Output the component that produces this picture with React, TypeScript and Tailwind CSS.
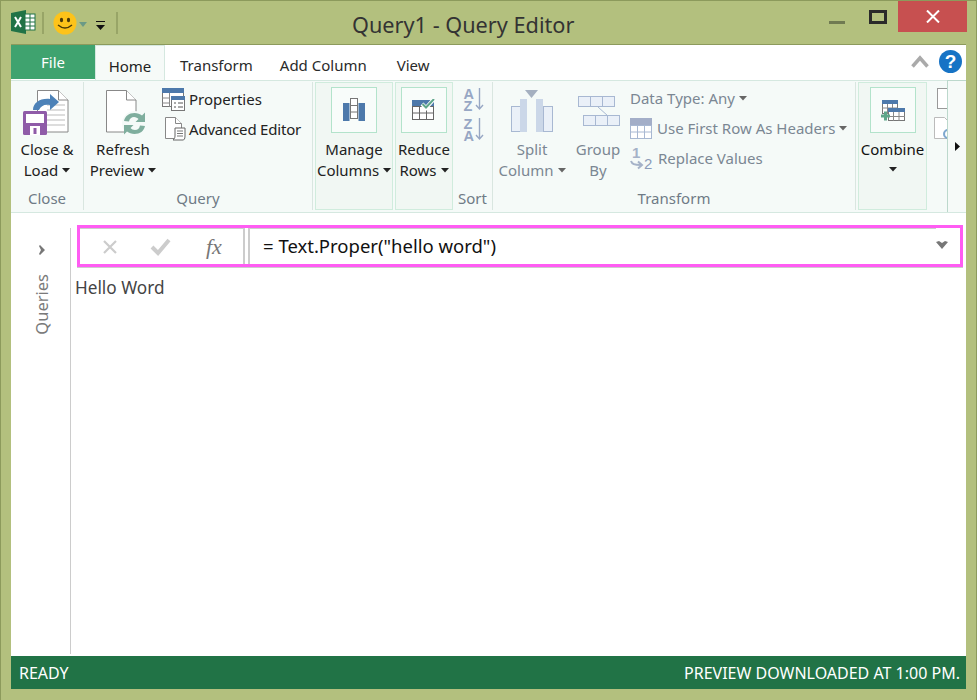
import React from "react";

const Caret = ({ c = "#222" }: { c?: string }) => (
  <svg width="8" height="5" viewBox="0 0 8 5" className="inline-block ml-[4px] align-[3px]"><path d="M0 0h8L4 4.5z" fill={c} /></svg>
);

const ExcelIcon = () => (
  <svg width="25" height="24" viewBox="0 0 25 24">
    <path d="M0 3 15 0v24L0 21z" fill="#217346" />
    <rect x="14" y="4" width="10" height="16" fill="#fff" stroke="#217346" />
    <path d="M14 8h10M14 12h10M14 16h10M19 4v16" stroke="#217346" fill="none" />
    <path d="M4 7l6 10M10 7l-6 10" stroke="#fff" strokeWidth="2" fill="none" />
  </svg>
);

const Smiley = () => (
  <svg width="24" height="24" viewBox="0 0 24 24">
    <circle cx="12" cy="12" r="11.5" fill="#fdc31a" />
    <ellipse cx="8.5" cy="9" rx="1.6" ry="2.2" fill="#4a3a08" />
    <ellipse cx="15.5" cy="9" rx="1.6" ry="2.2" fill="#4a3a08" />
    <path d="M5 14q7 6 14 0" stroke="#4a3a08" strokeWidth="1.4" fill="none" />
  </svg>
);

const CloseLoadIcon = () => (
  <svg width="46" height="45" viewBox="0 0 46 45" className="block">
    <path d="M14.500.5h21l9.500 9.500v32H14.500z" fill="#fff" stroke="#888" />
    <path d="M35.500.5V10H45" fill="#fff" stroke="#888" />
    <path d="M24 15h18M24 20h18M24 25h18M24 30h18M24 35h18" stroke="#bbb" />
    <path d="M10 20c0-7 7-12 17-11V4l9 8-9 8v-5c-6-1-9 1-11 5z" fill="#4d82b8" />
    <rect x="0" y="21" width="24" height="24" rx="1.500" fill="#8f5ba8" />
    <rect x="3" y="24" width="18" height="9" fill="#fff" />
    <rect x="7" y="36" width="10" height="9" fill="#fff" />
    <rect x="10.500" y="38" width="3" height="6" fill="#8f5ba8" />
  </svg>
);

const RefreshIcon = () => (
  <svg width="40" height="45" viewBox="0 0 40 45" className="block">
    <path d="M.5.500h20l9.500 9.500v32H.5z" fill="#fff" stroke="#888" />
    <path d="M20.500.5V10H30" fill="#fff" stroke="#888" />
    <circle cx="28.500" cy="33.500" r="12.500" fill="#f5faf8" />
    <path d="M18 31c1-5 5-8 10.500-8 3 0 5.500 1 7.500 2.500l3-3v9.500h-9.500l3-3c-1-1-2.500-2-4.500-2-2.500 0-4.500 1.500-5 4.500z" fill="#7fae9e" />
    <path d="M39 36c-1 5-5 8-10.500 8-3 0-5.500-1-7.500-2.500l-3 3V35h9.500l-3 3c1 1 2.500 2 4.500 2 2.500 0 4.500-1.500 5-4.500z" fill="#7fae9e" />
  </svg>
);

const PropertiesIcon = () => (
  <svg width="23" height="23" viewBox="0 0 23 23" className="block">
    <rect x=".5" y=".5" width="21" height="18" fill="#fff" stroke="#777" />
    <rect x="0" y="0" width="22" height="5" fill="#4d79ab" />
    <path d="M7.500 5v14M0 10h8M0 15h8" stroke="#888" />
    <rect x="9.500" y="8.500" width="13" height="14" fill="#fff" stroke="#777" />
    <rect x="9" y="8" width="14" height="4" fill="#4d79ab" />
    <path d="M12 15h2M16 15h5M12 19h2M16 19h5" stroke="#555" />
  </svg>
);

const AdvEditorIcon = () => (
  <svg width="22" height="24" viewBox="0 0 22 24" className="block">
    <path d="M.5.500h10l6 6v15H.5z" fill="#fff" stroke="#888" />
    <path d="M10.500.5v6h6" fill="#fff" stroke="#888" />
    <path d="M10 11h10v8c0 3-1 4-2 4H8c1-1 2-2 2-4z" fill="#fff" stroke="#666" />
    <path d="M12 14h6M12 16.500h6M12 19h6" stroke="#777" />
  </svg>
);

const ManageIcon = () => (
  <svg width="22" height="24" viewBox="0 0 22 24">
    <rect x="0" y="5" width="6.500" height="18" fill="#4d79ab" />
    <rect x="15.500" y="5" width="6.500" height="18" fill="#4d79ab" />
    <rect x="7.500" y=".5" width="7" height="20" fill="#fff" stroke="#777" />
    <path d="M7 7.500h8M7 14h8" stroke="#777" />
  </svg>
);

const ReduceIcon = () => (
  <svg width="24" height="22" viewBox="0 0 24 22">
    <rect x=".5" y="7.500" width="21" height="13" fill="#fff" stroke="#666" />
    <path d="M0 14h22M7.500 7v14M14.500 7v14" stroke="#666" />
    <rect x="0" y="1" width="22" height="6" fill="#4d79ab" />
    <path d="M10 5l4 4 8-9" stroke="#fff" strokeWidth="4" fill="none" />
    <path d="M10.500 5l3.500 3.500 8-8.500" stroke="#5ea68a" strokeWidth="2" fill="none" />
  </svg>
);

const SortAZ = ({ flip }: { flip?: boolean }) => (
  <svg width="22" height="23" viewBox="0 0 22 23" className="block overflow-visible">
    <text x="0.500" y={flip ? 23 : 11} fontFamily="Liberation Sans" fontWeight="700" fontSize="14.500" fill="#97a7c4">A</text>
    <text x="0.500" y={flip ? 11 : 23} fontFamily="Liberation Sans" fontWeight="700" fontSize="14.500" fill="#97a7c4">Z</text>
    <path d="M16.500 0v21M13 17l3.500 4 3.500-4" stroke="#97a7c4" strokeWidth="1.400" fill="none" />
  </svg>
);

const SplitIcon = () => (
  <svg width="42" height="42" viewBox="0 0 42 42" className="block">
    <rect x=".5" y="16.500" width="9" height="25" fill="#eaf0f8" stroke="#a8b8d2" />
    <rect x="32.500" y="16.500" width="9" height="25" fill="#eaf0f8" stroke="#a8b8d2" />
    <rect x="9" y="9" width="7" height="33" fill="#cbd7e8" />
    <rect x="25" y="9" width="7" height="33" fill="#cbd7e8" />
    <path d="M14 0h13l-6.500 8z" fill="#a5b0c0" />
  </svg>
);

const GroupIcon = () => (
  <svg width="42" height="30" viewBox="0 0 42 30" className="block">
    <rect x=".5" y=".5" width="36" height="10" fill="#eaf0f8" stroke="#a8b8d2" />
    <path d="M12.500 0v11M24.500 0v11" stroke="#a8b8d2" />
    <rect x="5.500" y="19.500" width="36" height="10" fill="#eaf0f8" stroke="#a8b8d2" />
    <path d="M17.500 19v11M29.500 19v11M20 11l10 9" stroke="#a8b8d2" />
  </svg>
);

const HeadersIcon = () => (
  <svg width="22" height="21" viewBox="0 0 22 21" className="block">
    <rect x="0" y="0" width="22" height="7" fill="#a3aec8" />
    <rect x=".5" y="7.500" width="21" height="13" fill="#fff" stroke="#a8b8d2" />
    <path d="M0 14h22M7.500 7v14M14.500 7v14" stroke="#a8b8d2" />
  </svg>
);

const ReplaceIcon = () => (
  <svg width="22" height="24" viewBox="0 0 22 24" className="block overflow-visible">
    <text x="2" y="12" fontFamily="Liberation Sans" fontWeight="700" fontSize="15" fill="#a5b2c8">1</text>
    <text x="14" y="23" fontFamily="Liberation Sans" fontSize="15" fill="#8c9cb8">2</text>
    <path d="M1 15c1 3 3 4 10 4M8 15.500l4 3.500-4 3.500" stroke="#a5b2c8" strokeWidth="2" fill="none" />
  </svg>
);

const CombineIcon = () => (
  <svg width="24" height="21" viewBox="0 0 24 21">
    <rect x="1.500" y=".5" width="15" height="13" fill="#fff" stroke="#777" />
    <rect x="1" y="0" width="16" height="4" fill="#4d79ab" />
    <path d="M1 8h16M6.500 4v10M11.500 4v10" stroke="#888" />
    <rect x="7.500" y="8.500" width="16" height="12" fill="#fff" stroke="#777" />
    <rect x="7" y="8" width="17" height="4" fill="#4d79ab" />
    <path d="M7 16.500h17M12.500 12v9M18 12v9" stroke="#888" />
    <path d="M0 16h9M4.500 11.500v9" stroke="#5ea68a" strokeWidth="3" />
  </svg>
);

const Sep = () => <div className="w-px h-[128px] mt-[1px] bg-[#d9e6e0]" />;

const BigBox = ({ children }: { children: React.ReactNode }) => (
  <div className="w-[46px] h-[46px] border border-[#b3e3cb] bg-[#f8fcfa] flex items-center justify-center">{children}</div>
);

const GroupLabel = ({ children }: { children: React.ReactNode }) => (
  <div className="h-[24px] leading-[24px] text-center text-[15px] text-[#6f7b86]">{children}</div>
);

export default function App() {
  return (
    <div className="relative w-[977px] h-[700px] bg-[#b3c07e] border-t border-l border-r border-[#8c9a5c] overflow-hidden font-['Noto_Sans',sans-serif] text-[15px] text-[#222] flex flex-col">
      {/* title bar */}
      <div className="h-[43px] shrink-0 flex items-start pl-[10px] relative">
        <div className="mt-[9px]"><ExcelIcon /></div>
        <div className="w-[2px] h-[22px] bg-[#98a567] mt-[11px] ml-[6px]" />
        <div className="mt-[10px] ml-[9px]"><Smiley /></div>
        <svg width="8" height="5" viewBox="0 0 8 5" className="mt-[21px] ml-[2px]"><path d="M0 0h8L4 5z" fill="#6b9a86" /></svg>
        <svg width="10" height="10" viewBox="0 0 10 10" className="mt-[20px] ml-[9px]"><path d="M0 .5h9" stroke="#111" /><path d="M0 4h9L4.500 9z" fill="#111" /></svg>
        <div className="w-[2px] h-[22px] bg-[#98a567] mt-[11px] ml-[10px]" />
        <div className="ml-[234px] mt-[9px] text-[21.7px] leading-[30px] text-[#333] whitespace-nowrap">Query1 - Query Editor</div>
        <div className="flex-1" />
        <div className="w-[16px] h-[3px] bg-[#707a52] mt-[20px] mr-[24px]" />
        <div className="w-[18px] h-[14px] border-[3px] border-[#2a2a2a] mt-[9px] mr-[11px]" />
        <div className="w-[69px] h-[31px] bg-[#c75050] flex items-center justify-center mr-[9px]">
          <svg width="14" height="13" viewBox="0 0 14 13"><path d="M1 .5l12 12M13 .5l-12 12" stroke="#fff" strokeWidth="2" /></svg>
        </div>
      </div>

      {/* window */}
      <div className="ml-[10px] mr-[10px] w-[955px] h-[645px] bg-white border-t border-[#8c9a5c] flex flex-col">
        {/* tabs */}
        <div className="h-[35px] shrink-0 flex items-start">
          <div className="w-[84px] h-[34px] bg-[#3fa36f] text-white text-center leading-[34px] text-[15px]">File</div>
          <div className="w-[70px] h-[35px] bg-[#f6faf8] border-t border-l border-r border-[#d5e8e0] text-center leading-[41px] text-[#222]">Home</div>
          <div className="ml-[15px] leading-[41px] text-[#2a2a2a]">Transform</div>
          <div className="ml-[27px] leading-[41px] text-[#2a2a2a]">Add Column</div>
          <div className="ml-[30px] leading-[41px] text-[#2a2a2a]">View</div>
          <div className="flex-1" />
          <svg width="18" height="13" viewBox="0 0 18 13" className="mt-[10px]"><path d="M1.500 11.500 9 3l7.500 8.500" stroke="#aaa" strokeWidth="3.500" fill="none" /></svg>
          <div className="w-[23px] h-[23px] rounded-full bg-[#1673c5] text-white font-bold text-[19px] leading-[23px] text-center ml-[10px] mr-[4px] mt-[5px] font-['Liberation_Sans']">?</div>
        </div>

        {/* ribbon */}
        <div className="h-[133px] shrink-0 bg-[#f5faf8] border-t border-b border-[#d5e8e0] flex items-start relative">
          {/* Close */}
          <div className="w-[72px] h-[129px] flex flex-col">
            <div className="mt-[9px] ml-[12px]"><CloseLoadIcon /></div>
            <div className="mt-[4px] text-center leading-[21px] whitespace-nowrap">Close &amp;<br />Load<Caret /></div>
            <div className="flex-1" />
            <GroupLabel>Close</GroupLabel>
          </div>
          <Sep />
          {/* Query */}
          <div className="w-[228px] h-[129px] flex flex-col">
            <div className="flex flex-1">
              <div className="w-[78px] flex flex-col">
                <div className="mt-[9px] ml-[22px]"><RefreshIcon /></div>
                <div className="mt-[4px] text-center leading-[21px] whitespace-nowrap">Refresh<br />Preview<Caret /></div>
              </div>
              <div className="flex flex-col pt-[3px]">
                <div className="h-[30px] flex items-center gap-[4px]"><PropertiesIcon /><span className="whitespace-nowrap">Properties</span></div>
                <div className="h-[30px] flex items-center gap-[2px] pl-[3px]"><AdvEditorIcon /><span className="whitespace-nowrap tracking-[-0.2px]">Advanced Editor</span></div>
              </div>
            </div>
            <GroupLabel>Query</GroupLabel>
          </div>
          <Sep />
          {/* Manage */}
          <div className="ml-[2px] mt-[1px] w-[78px] h-[128px] bg-[#f1f7f3] border border-[#d0ecdd] flex flex-col items-center">
            <div className="mt-[4px]"><BigBox><ManageIcon /></BigBox></div>
            <div className="mt-[6px] text-center leading-[21px] whitespace-nowrap">Manage<br />Columns<Caret /></div>
          </div>
          {/* Reduce */}
          <div className="ml-[2px] mt-[1px] w-[58px] h-[128px] bg-[#f1f7f3] border border-[#d0ecdd] flex flex-col items-center">
            <div className="mt-[4px]"><BigBox><ReduceIcon /></BigBox></div>
            <div className="mt-[6px] text-center leading-[21px] whitespace-nowrap">Reduce<br />Rows<Caret /></div>
          </div>
          {/* Sort */}
          <div className="w-[39px] h-[129px] flex flex-col items-center">
            <div className="mt-[7px] ml-[2px] flex flex-col gap-[7px]"><SortAZ /><SortAZ flip /></div>
            <div className="flex-1" />
            <GroupLabel>Sort</GroupLabel>
          </div>
          <Sep />
          {/* Transform */}
          <div className="w-[362px] h-[129px] flex flex-col text-[#7b8793]">
            <div className="flex flex-1">
              <div className="w-[78px] flex flex-col items-center">
                <div className="mt-[9px] h-[44px]"><SplitIcon /></div>
                <div className="mt-[5px] text-center leading-[21px] whitespace-nowrap">Split<br />Column<Caret c="#666" /></div>
              </div>
              <div className="w-[58px] flex flex-col items-center pr-[4px]">
                <div className="mt-[9px] h-[44px] pt-[6px] ml-[2px]"><GroupIcon /></div>
                <div className="mt-[5px] text-center leading-[21px]">Group<br />By</div>
              </div>
              <div className="flex flex-col pt-[2px] pl-[1px]">
                <div className="h-[30px] flex items-center whitespace-nowrap">Data Type: Any<Caret c="#666" /></div>
                <div className="h-[30px] flex items-center gap-[5px] whitespace-nowrap"><HeadersIcon /><span>Use First Row As Headers<Caret c="#666" /></span></div>
                <div className="h-[30px] flex items-center gap-[6px] whitespace-nowrap"><ReplaceIcon /><span>Replace Values</span></div>
              </div>
            </div>
            <GroupLabel>Transform</GroupLabel>
          </div>
          <Sep />
          {/* Combine */}
          <div className="ml-[2px] mt-[1px] w-[69px] h-[128px] bg-[#f1f7f3] border border-[#d0ecdd] flex flex-col items-center">
            <div className="mt-[4px]"><BigBox><CombineIcon /></BigBox></div>
            <div className="mt-[6px] text-center leading-[21px] whitespace-nowrap text-[#111]">Combine</div>
            <svg width="8" height="5" viewBox="0 0 8 5" className="mt-[7px]"><path d="M0 0h8L4 4.500z" fill="#222" /></svg>
          </div>
          {/* Clipped next group */}
          <div className="flex-1 h-[127px] overflow-hidden pl-[10px] pt-[7px] flex flex-col gap-[8px]">
            <div className="w-[20px] h-[21px] bg-white border border-[#999] shrink-0" />
            <svg width="20" height="22" viewBox="0 0 20 22" className="-ml-[3px] shrink-0">
              <path d="M.5.500h10l8 8v13H.5z" fill="#fff" stroke="#bbb" />
              <circle cx="14" cy="17" r="4" fill="none" stroke="#7fa8cf" strokeWidth="2" />
            </svg>
          </div>
          <div className="w-[19px] h-[132px] -mt-px bg-[#f6faf8] border-l border-t border-[#bcd8cc] flex items-center justify-center">
            <svg width="5" height="9" viewBox="0 0 5 9"><path d="M0 0l5 4.500L0 9z" fill="#111" /></svg>
          </div>
        </div>

        {/* content */}
        <div className="flex-1 flex min-h-0">
          <div className="w-[60px] shrink-0 border-r border-[#ccc] mt-[15px] mb-[2px] flex flex-col items-center pl-[3px]">
            <svg width="7" height="10" viewBox="0 0 7 10" className="mt-[17px]"><path d="M1 0l5 5-5 5-1-1 2-4-2-4z" fill="#777" /></svg>
            <div className="mt-[19px] [writing-mode:vertical-rl] rotate-180 text-[#7a7a7a] text-[16.5px] leading-[20px]">Queries</div>
          </div>
          <div className="flex-1 min-w-0">
            <div className="ml-[6px] mt-[12px] w-[886px] h-[42px] border-[3px] border-[#ff5cf3] flex items-center bg-white shadow-[0_1px_0_#ccc]">
              <div className="w-[163px] h-full flex items-center border-t border-[#ccc]">
                <svg width="14" height="14" viewBox="0 0 14 14" className="ml-[23px]"><path d="M1 1l12 12M13 1L1 13" stroke="#ccc" strokeWidth="2.200" /></svg>
                <svg width="21" height="18" viewBox="0 0 21 18" className="ml-[33px]"><path d="M2 9l6 6L19 2" stroke="#ccc" strokeWidth="4" fill="none" /></svg>
                <span className="ml-[35px] font-['Liberation_Serif'] italic text-[22px] leading-[24px] text-[#777]">fx</span>
              </div>
              <div className="w-[7px] h-full border-l-[2px] border-r-[2px] border-l-[#ccc] border-r-[#ccc] bg-white" />
              <div className="flex-1 h-full border-t border-[#ccc] flex items-center pl-[13px] pb-[2px] text-[18.5px] text-[#111] whitespace-nowrap">= Text.Proper("hello word")</div>
              <svg width="12" height="8" viewBox="0 0 12 8" className="mr-[12px] mb-[3px]"><path d="M0 1l3-1 3 2 3-2 3 1-6 7z" fill="#777" /></svg>
            </div>
            <div className="ml-[4px] mt-[7px] text-[17.2px] leading-[28px] text-[#444]">Hello Word</div>
          </div>
        </div>

        {/* status */}
        <div className="h-[33px] shrink-0 bg-[#217346] text-white text-[16px] flex items-center justify-between pl-[8px] pr-[6px] pt-[1px] leading-[32px]">
          <span>READY</span>
          <span>PREVIEW DOWNLOADED AT 1:00 PM.</span>
        </div>
      </div>
    </div>
  );
}
